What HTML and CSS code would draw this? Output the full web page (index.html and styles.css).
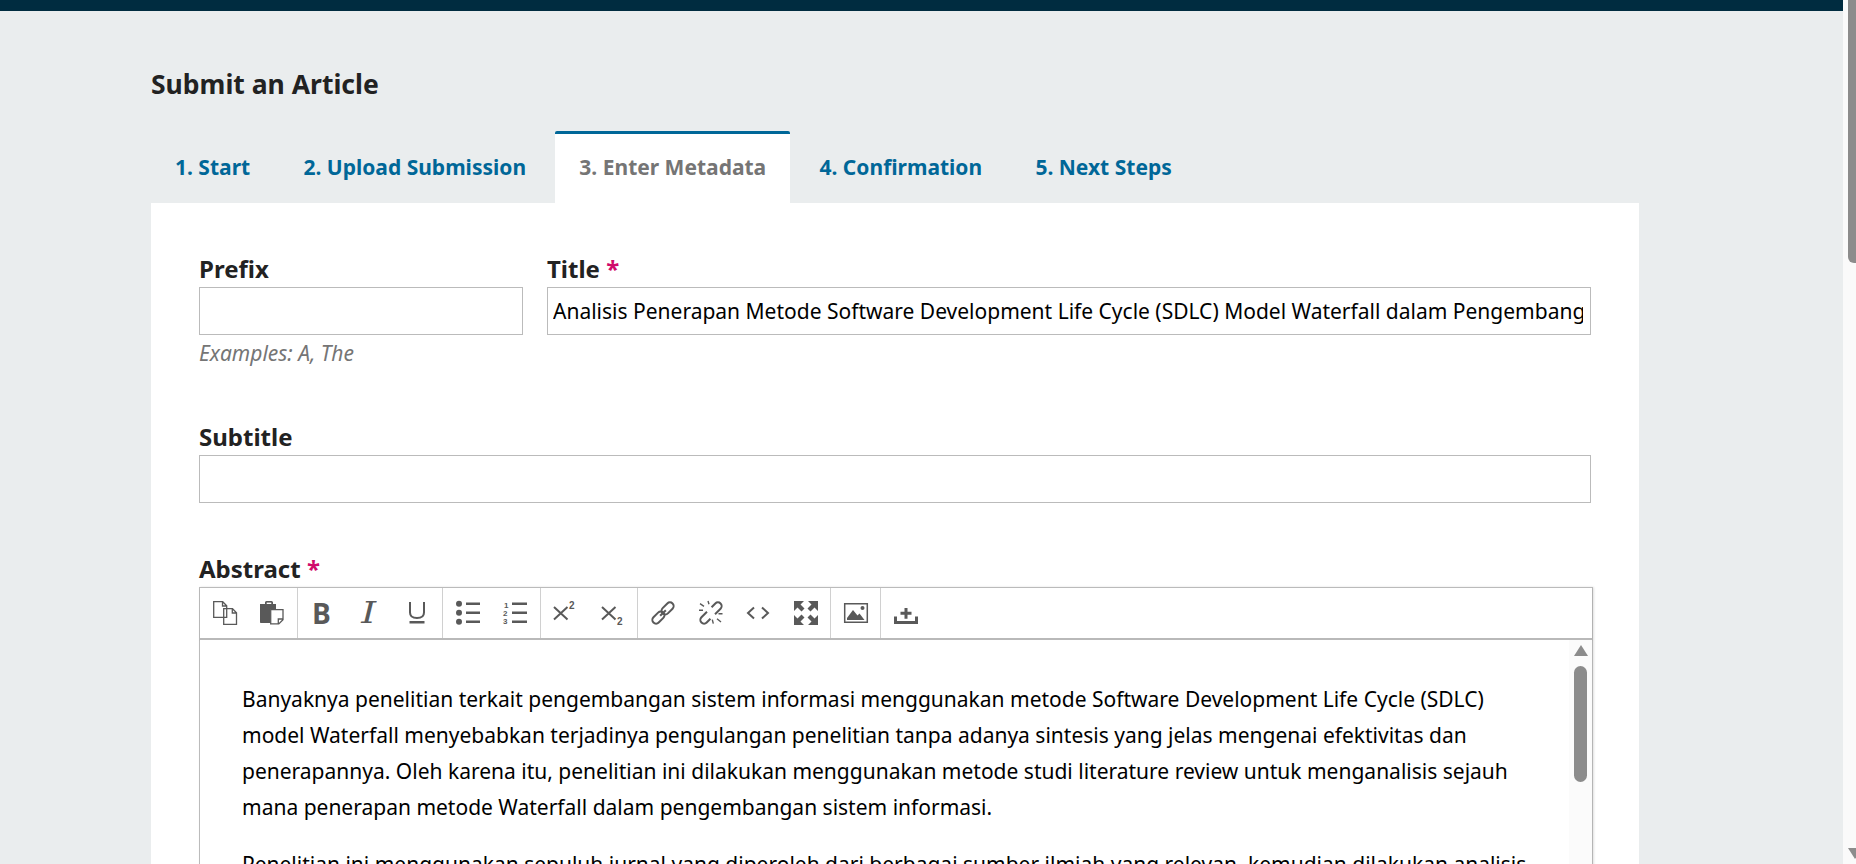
FILE: index.html
```html
<!DOCTYPE html>
<html lang="en">
<head>
<meta charset="utf-8">
<title>Submit an Article</title>
<link rel="stylesheet" href="styles.css">
</head>
<body>
<div class="page">
  <header class="topbar"></header>
  <main class="content">
    <h1 class="page-title">Submit an Article</h1>
    <nav class="tabs">
      <a class="tab">1. Start</a>
      <a class="tab">2. Upload Submission</a>
      <a class="tab active">3. Enter Metadata</a>
      <a class="tab">4. Confirmation</a>
      <a class="tab">5. Next Steps</a>
    </nav>
    <section class="panel">
      <div class="title-row">
        <div class="field">
          <label class="label">Prefix</label>
          <input class="input" type="text">
          <p class="hint">Examples: A, The</p>
        </div>
        <div class="field">
          <label class="label">Title <span class="req">*</span></label>
          <input class="input" type="text" value="Analisis Penerapan Metode Software Development Life Cycle (SDLC) Model Waterfall dalam Pengembangan Sistem Informasi">
        </div>
      </div>
      <div class="field subtitle">
        <label class="label">Subtitle</label>
        <input class="input" type="text">
      </div>
      <div class="field abstract">
        <label class="label abstract-label">Abstract <span class="req">*</span></label>
        <div class="editor">
          <div class="toolbar">
            <div class="group">
              <button class="btn"><svg viewBox="0 0 24 24"><path class="ol" d="M.7.7h9l4 4v11.600H.7zM9.500.7v4.300h4.300"/><path class="ol" d="M10.700 7.700h8.800l4 4v11.600h-12.800zM19.300 7.700v4.300h4.200"/></svg></button>
              <button class="btn"><svg viewBox="0 0 24 24"><path class="fill" d="M0 3h5V1.500C5 .8 5.600 0 6.500 0h5c.9 0 1.500.8 1.500 1.500V3h3v5h-6v14H1c-.6 0-1-.4-1-1z"/><path class="wh" d="M6.700 1.600h4.600V3H6.700z"/><path class="ol2" d="M10.700 8.700h12.300v10l-4.200 4.200h-8.100zM23 18h-4.700v4.700"/></svg></button>
            </div>
            <div class="group">
              <button class="btn"><span class="g g-b">B</span></button>
              <button class="btn"><span class="g g-i">I</span></button>
              <button class="btn"><svg viewBox="0 0 24 24"><path class="st" d="M4 1v10.500c0 3.800 2.800 5.500 7 5.500s7-1.700 7-5.500V1"/><path class="fill" d="M3.500 20h15v2.500h-15z"/></svg></button>
            </div>
            <div class="group">
              <button class="btn"><svg viewBox="0 0 24 24"><circle class="fill" cx="3" cy="2.800" r="3"/><circle class="fill" cx="3" cy="11.800" r="3"/><circle class="fill" cx="3" cy="20.800" r="3"/><path class="fill" d="M10 1.500h14v2.600H10zM10 10.500h14v2.600H10zM10 19.500h14v2.600H10z"/></svg></button>
              <button class="btn"><svg viewBox="0 0 24 24"><text class="num" x="1" y="6.500">1</text><text class="num" x="0" y="14.500">2</text><text class="num" x="0" y="23">3</text><path class="fill" d="M9 1.500h15v2.600H9zM9 10.500h15v2.600H9zM9 19.500h15v2.600H9z"/></svg></button>
            </div>
            <div class="group">
              <button class="btn"><svg viewBox="0 0 24 24"><path class="st2" d="M1 6l13.500 12.500M14.500 6L1 18.500"/><text class="sup" x="16" y="7.500">2</text></svg></button>
              <button class="btn"><svg viewBox="0 0 24 24"><path class="st2" d="M1 6l13.500 12.500M14.500 6L1 18.500"/><text class="sup" x="16" y="24">2</text></svg></button>
            </div>
            <div class="group">
              <button class="btn"><svg viewBox="0 0 24 24"><g transform="rotate(-45 12 12)"><rect class="lnk" x="-1.500" y="8.300" width="14" height="7.400" rx="3.700"/><rect class="lnk" x="11.500" y="8.300" width="14" height="7.400" rx="3.700"/><path class="lnk" d="M8 12h8"/></g></svg></button>
              <button class="btn"><svg viewBox="0 0 24 24"><g transform="rotate(-45 12 12)"><path class="lnk" d="M10 8.300H2.200a3.700 3.700 0 0 0 0 7.400H7.500"/><path class="lnk" d="M14 15.700h7.800a3.700 3.700 0 0 0 0-7.400H16.500"/></g><path class="lnk2" d="M1 2.700l4 2.600M9 0l1 3.300M0 9.300h4M23.500 12.700h-4M18 17.700l4 3.300M13.300 18.700l1 4"/></svg></button>
              <button class="btn"><svg viewBox="0 0 24 24"><path class="st3" d="M8 6.500L2 12l6 5.500M16 6.500L22 12l-6 5.500"/></svg></button>
              <button class="btn"><svg viewBox="0 0 24 24"><path class="fill" d="M0 0H10L6.500 3.500 10.500 7.500 7.500 10.500 3.500 6.500 0 10zM24 0V10L20.500 6.500 16.500 10.500 13.500 7.500 17.500 3.500 14 0zM0 24V14L3.500 17.500 7.500 13.500 10.500 16.500 6.500 20.500 10 24zM24 24H14L17.500 20.500 13.500 16.500 16.500 13.500 20.500 17.500 24 14z"/></svg></button>
            </div>
            <div class="group">
              <button class="btn"><svg viewBox="0 0 24 24"><path class="ol3" d="M.7 2.700h22.600v18.600H.7z"/><circle class="fill" cx="18.500" cy="7" r="2"/><path class="fill" d="M3 19V17l6-8 4.500 5.500 2-2 5 6.500z"/></svg></button>
            </div>
            <div class="group last">
              <button class="btn"><svg viewBox="0 0 24 24"><path class="fill" d="M10.500 7h3v3.800h4v3h-4v4h-3v-4h-4v-3h4zM0 15.500h3V20h18v-4.500h3V23H0z"/></svg></button>
            </div>
          </div>
          <div class="editor-body">
            <div class="doc">
              <p>Banyaknya penelitian terkait pengembangan sistem informasi menggunakan metode Software Development Life Cycle (SDLC) model Waterfall menyebabkan terjadinya pengulangan penelitian tanpa adanya sintesis yang jelas mengenai efektivitas dan penerapannya. Oleh karena itu, penelitian ini dilakukan menggunakan metode studi literature review untuk menganalisis sejauh mana penerapan metode Waterfall dalam pengembangan sistem informasi.</p>
              <p>Penelitian ini menggunakan sepuluh jurnal yang diperoleh dari berbagai sumber ilmiah yang relevan, kemudian dilakukan analisis</p>
            </div>
            <div class="inner-scroll">
              <span class="arrow-up"></span>
              <span class="inner-thumb"></span>
            </div>
          </div>
        </div>
      </div>
    </section>
  </main>
</div>
<aside class="page-scroll">
  <span class="page-thumb"></span>
  <span class="arrow-down"></span>
</aside>
</body>
</html>
```
FILE: styles.css
```css
* { box-sizing: border-box; }
html, body { height: 100%; }
body {
  margin: 0;
  height: 864px;
  overflow: hidden;
  display: flex;
  font-family: "Noto Sans", sans-serif;
  background: #eaedee;
  color: #222;
}
.page { width: 1843px; flex: none; height: 864px; overflow: hidden; }
.topbar { height: 11px; background: #002c40; }
.content { padding: 0 204px 0 151px; }
.page-title { margin: 0; padding-top: 55px; font-size: 26.5px; line-height: 36px; font-weight: 700; }
.tabs { display: flex; gap: 5.3px; margin-top: 29px; height: 72px; }
.tab {
  padding: 0 24px;
  font-size: 21px;
  font-weight: 700;
  line-height: 66px;
  color: #006798;
  border-top: 3px solid transparent;
}
.tab.active { background: #fff; color: #757575; border-top-color: #006798; border-radius: 2px 2px 0 0; }
.panel { background: #fff; padding: 52px 48px 200px; }
.title-row { display: grid; grid-template-columns: 324px 1fr; column-gap: 24px; }
.label { display: block; font-size: 24px; font-weight: 700; line-height: 28px; margin-bottom: 4px; color: #222; }
.req { color: #d00a6c; }
.input {
  display: block;
  width: 100%;
  height: 48px;
  border: 1px solid #bbb;
  border-radius: 0;
  padding: 0 7px 0 5px;
  font: 21px "Noto Sans", sans-serif;
  color: #000;
  background: #fff;
  outline: 0;
}
.hint { margin: 4px 0 0; font-size: 21px; line-height: 28px; font-style: italic; color: #757575; }
.subtitle { margin-top: 56px; }
.abstract { margin-top: 52px; }
.editor { width: 1394px; border: 1px solid #bbb; border-right: 1px solid #b5b5b5; box-shadow: 1px 0 2px rgba(0,0,0,.12); }
.toolbar { display: flex; height: 52px; border-bottom: 2px solid #b9b9b9; box-shadow: 0 1px 1px rgba(0,0,0,.08); }
.group { display: flex; padding: 0 .5px 0 1px; border-right: 1px solid #d0d0d0; }
.group.last { border-right: 0; }
.btn {
  width: 47.6px;
  padding: 0;
  border: 0;
  background: none;
  display: flex;
  align-items: center;
  justify-content: center;
}
.btn svg { width: 24px; height: 24px; display: block; overflow: visible; }
.fill { fill: #595959; }
.wh { fill: #fff; }
.ol, .ol2, .ol3, .st, .st2, .st3, .lnk, .lnk2 { fill: none; stroke: #595959; }
.ol { stroke-width: 1.3; }
.ol2 { stroke-width: 1.3; fill: #fff; }
.ol3 { stroke-width: 1.5; }
.st { stroke-width: 2; }
.st2 { stroke-width: 2; }
.st3 { stroke-width: 2; }
.lnk { stroke-width: 2; }
.lnk2 { stroke-width: 1.4; }
.num { font-size: 8px; font-weight: 700; fill: #595959; font-family: "Liberation Sans", sans-serif; }
.sup { font-size: 10px; font-weight: 700; fill: #595959; font-family: "Liberation Sans", sans-serif; }
.g { color: #595959; line-height: 24px; display: block; }
.g-b { font: 700 28px/24px "Open Sans", sans-serif; margin-left: -2px; }
.g-i { font: italic 400 29px/24px "DejaVu Serif", serif; transform: scaleX(1.3); margin-left: -2px; }
.editor-body { position: relative; display: flex; height: 400px; background: #fff; }
.doc { flex: 1; padding: 41px 36px 0 42px; font-size: 21px; line-height: 36px; color: #000; }
.doc p { margin: 0 0 21px; }
.inner-scroll { flex: none; width: 23px; margin-left: auto; background: #fbfbfb; display: flex; flex-direction: column; align-items: center; padding-top: 5px; }
.arrow-up { width: 0; height: 0; border-left: 7.5px solid transparent; border-right: 7.5px solid transparent; border-bottom: 11px solid #8c8c8c; }
.inner-thumb { display: block; width: 13px; height: 116px; margin-top: 10px; border-radius: 7px; background: #8c8c8c; }
.page-scroll { flex: none; width: 13px; height: 864px; overflow: hidden; background: #fafafa; display: flex; flex-direction: column; align-items: flex-end; justify-content: space-between; padding-bottom: 5px; }
.page-thumb { display: block; width: 8px; height: 263px; background: #8c8c8c; border-radius: 0 0 0 6px; }
.arrow-down { width: 0; height: 0; border-left: 7.5px solid transparent; border-right: 7.5px solid transparent; border-top: 11px solid #8c8c8c; margin-right: -6px; }
```
